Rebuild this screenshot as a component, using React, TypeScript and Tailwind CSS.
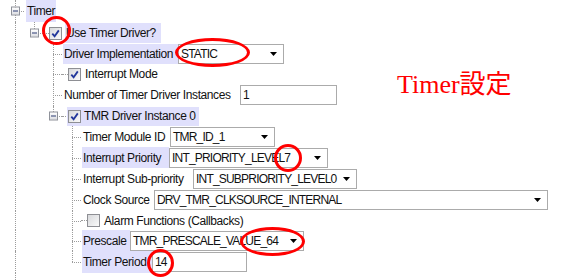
import type { ReactNode } from "react";

type CellKind = "blank" | "pipe" | "tee" | "elbow" | "boxTee" | "boxElbow";

function ExpandBox() {
  return (
    <div className="absolute left-[6px] top-1/2 flex h-[9px] w-[9px] -translate-y-1/2 items-center justify-center border border-[#8f929a] bg-linear-to-b from-white to-[#dcdde2]">
      <div className="h-px w-[5px] bg-[#2b3a72]" />
    </div>
  );
}

function Cell({ kind }: { kind: CellKind }) {
  const full = kind === "pipe" || kind === "tee" || kind === "boxTee";
  const half = kind === "elbow" || kind === "boxElbow";
  const horiz = kind !== "blank" && kind !== "pipe";
  const box = kind === "boxTee" || kind === "boxElbow";
  return (
    <div className="relative w-[19px] shrink-0 self-stretch">
      {full && <div className="absolute bottom-0 left-[10px] top-0 border-l border-dotted border-[#9c9c9c]" />}
      {half && <div className="absolute left-[10px] top-0 h-1/2 border-l border-dotted border-[#9c9c9c]" />}
      {horiz && <div className="absolute left-[10px] right-0 top-1/2 border-t border-dotted border-[#9c9c9c]" />}
      {box && <ExpandBox />}
    </div>
  );
}

function Lead() {
  return <div className="w-[6px] shrink-0 border-t border-dotted border-[#9c9c9c]" />;
}

function Check({ checked }: { checked?: boolean }) {
  return (
    <div className="flex h-[13px] w-[13px] shrink-0 items-center justify-center border border-[#8e8f94] bg-linear-to-br from-[#d8d9dc] to-[#fafafa]">
      {checked && (
        <svg width="9" height="9" viewBox="0 0 9 9">
          <path d="M1.3 4.6 L3.6 7.2 L7.8 1.4" stroke="#22379b" strokeWidth="1.8" fill="none" />
        </svg>
      )}
    </div>
  );
}

function Arrow() {
  return (
    <svg width="7" height="4" viewBox="0 0 7 4" className="shrink-0">
      <polygon points="0,0 7,0 3.5,4" fill="#000" />
    </svg>
  );
}

function Combo({ w, value, arrow = true }: { w: string; value: string; arrow?: boolean }) {
  return (
    <div className={`flex h-[20px] shrink-0 items-center justify-between border border-[#ababab] bg-white pl-[2px] pr-[6px] tracking-[-0.8px] ${w}`}>
      <span className="whitespace-nowrap">{value}</span>
      {arrow && <Arrow />}
    </div>
  );
}

function Row({ h, cells, children }: { h: string; cells: CellKind[]; children?: ReactNode }) {
  return (
    <div className={`flex items-center ${h}`}>
      {cells.map((c, i) => (
        <Cell key={i} kind={c} />
      ))}
      {children}
    </div>
  );
}

function Ring({ className }: { className: string }) {
  return <div className={`pointer-events-none absolute rounded-[50%] border-[3px] border-[#ff0000] ${className}`} />;
}

export default function App() {
  const L2: CellKind[] = ["pipe", "blank", "tee"];
  const L3: CellKind[] = ["pipe", "blank", "blank", "tee"];
  return (
    <div className="relative flex h-[280px] w-[574px] flex-col overflow-hidden bg-white pl-[5px] font-['Liberation_Sans',Arial,sans-serif] text-[12px] leading-none tracking-[-0.4px] text-[#111]">
      {/* Timer */}
      <Row h="h-[22px]" cells={["boxTee"]}>
        <div className="ml-[2px] flex h-full items-center bg-[#e0e0fc] px-[1px]">Timer</div>
      </Row>

      {/* Use Timer Driver? */}
      <Row h="h-[22px]" cells={["pipe", "boxElbow"]}>
        <Lead />
        <Check checked />
        <div className="ml-[3px] flex h-[20px] items-center bg-[#e0e0fc] pl-[1px] pr-[5px]">Use Timer Driver?</div>
      </Row>

      <Row h="h-[20px]" cells={L2}>
        <div className="ml-[1px] flex h-full w-[115px] items-center bg-[#e0e0fc] pl-[1px]">Driver Implementation</div>
        <Combo w="w-[106px]" value="STATIC" />
      </Row>

      <Row h="h-[20px]" cells={L2}>
        <Lead />
        <Check checked />
        <div className="ml-[4px]">Interrupt Mode</div>
      </Row>

      <Row h="h-[22px]" cells={L2}>
        <div className="ml-[2px] w-[176px]">Number of Timer Driver Instances</div>
        <Combo w="w-[97px]" value="1" arrow={false} />
      </Row>

      {/* TMR Driver Instance 0 */}
      <Row h="h-[20px]" cells={["pipe", "blank", "boxElbow"]}>
        <Lead />
        <div className="-ml-[1px] flex h-[19px] items-center bg-[#e0e0fc] pl-[1px] pr-[3px]">
          <Check checked />
          <span className="ml-[3px]">TMR Driver Instance 0</span>
        </div>
      </Row>

      <Row h="h-[21px]" cells={L3}>
        <div className="ml-[1px] w-[88px] pl-[1px]">Timer Module ID</div>
        <Combo w="w-[105px]" value="TMR_ID_1" />
      </Row>

      <Row h="h-[21px]" cells={L3}>
        <div className="ml-[1px] flex h-full w-[87px] items-center bg-[#e0e0fc] pl-[1px]">Interrupt Priority</div>
        <Combo w="w-[159px]" value="INT_PRIORITY_LEVEL7" />
      </Row>

      <Row h="h-[21px]" cells={L3}>
        <div className="ml-[1px] w-[111px] pl-[1px]">Interrupt Sub-priority</div>
        <Combo w="w-[164px]" value="INT_SUBPRIORITY_LEVEL0" />
      </Row>

      <Row h="h-[22px]" cells={L3}>
        <div className="ml-[1px] w-[72px] pl-[1px]">Clock Source</div>
        <Combo w="w-[394px]" value="DRV_TMR_CLKSOURCE_INTERNAL" />
      </Row>

      <Row h="h-[19px]" cells={["pipe", "blank", "blank", "tee"]}>
        <Lead />
        <Check />
        <div className="ml-[4px]">Alarm Functions (Callbacks)</div>
      </Row>

      <Row h="h-[21px]" cells={L3}>
        <div className="ml-[1px] flex h-full w-[48px] items-center bg-[#e0e0fc] pl-[1px]">Prescale</div>
        <Combo w="w-[174px]" value="TMR_PRESCALE_VALUE_64" />
      </Row>

      <Row h="h-[22px]" cells={["pipe", "blank", "blank", "elbow"]}>
        <div className="ml-[1px] flex h-full w-[70px] items-center bg-[#e0e0fc] pl-[1px]">Timer Period</div>
        <Combo w="w-[95px]" value="14" arrow={false} />
      </Row>

      <div className="flex flex-1">
        <Cell kind="pipe" />
      </div>

      {/* annotation */}
      <div className="absolute left-[397px] top-[72px] whitespace-nowrap font-['Liberation_Serif','Noto_Sans_CJK_JP',serif] text-[26px] leading-none tracking-normal text-[#ff0000]">
        Timer設定
      </div>

      <Ring className="left-[42px] top-[16px] h-[29px] w-[29px]" />
      <Ring className="left-[175px] top-[38px] h-[29px] w-[75px]" />
      <Ring className="left-[274px] top-[144px] h-[28px] w-[28px]" />
      <Ring className="left-[240px] top-[227px] h-[29px] w-[65px]" />
      <Ring className="left-[147px] top-[249px] h-[28px] w-[27px]" />
    </div>
  );
}
